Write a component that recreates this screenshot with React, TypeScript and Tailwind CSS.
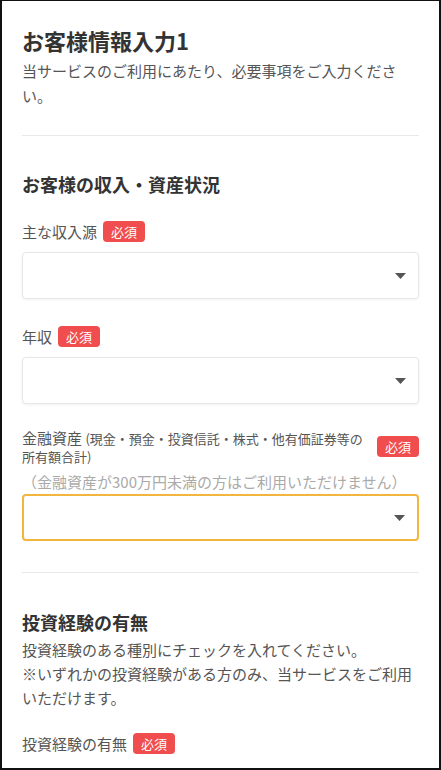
import React from "react";

function Badge() {
  return (
    <span className="inline-block shrink-0 rounded bg-[#f04e4e] px-2 text-[13px] leading-[21px] text-white">
      必須
    </span>
  );
}

function SelectBox({ active = false }: { active?: boolean }) {
  return (
    <div
      className={`flex h-[47px] items-center justify-end rounded bg-white pr-3 ${
        active
          ? "border-2 border-[#f2b63f]"
          : "border border-[#e7e7e7] shadow-[0_1px_3px_rgba(0,0,0,0.06)]"
      }`}>
      <svg width="11" height="6" viewBox="0 0 11 6">
        <path d="M0 0 L11 0 L5.5 6 Z" fill="#555" />
      </svg>
    </div>
  );
}

export default function App() {
  return (
    <div
      className="h-[770px] overflow-hidden border-t border-x-2 border-b-2 border-[#111] bg-white px-5 pt-[25px] text-[#555]"
      style={{ fontFamily: '"Noto Sans CJK JP", "Noto Sans", sans-serif' }}>
      {/* header */}
      <h1 className="text-[22px] font-bold leading-[28px] text-[#333]">お客様情報入力1</h1>
      <p className="mt-[4px] text-[15px] leading-[25px]">
        当サービスのご利用にあたり、必要事項をご入力ください。
      </p>

      <hr className="mt-[27px] border-[#e8e8e8]" />

      {/* income */}
      <h2 className="mt-[36px] text-[18px] font-bold leading-[24px] text-[#333]">
        お客様の収入・資産状況
      </h2>

      <div className="mt-[25px] flex items-center gap-[6px] text-[15px] leading-[21px]">
        主な収入源
        <Badge />
      </div>
      <div className="mt-[10px]">
        <SelectBox />
      </div>

      <div className="mt-[27px] flex items-center gap-[6px] text-[15px] leading-[21px]">
        年収
        <Badge />
      </div>
      <div className="mt-[10px]">
        <SelectBox />
      </div>

      <div className="mt-[25px] flex items-start justify-between gap-2">
        <p className="flex-1 text-[15px] leading-[17px]">
          金融資産{" "}
          <span className="text-[13px]">(現金・預金・投資信託・株式・他有価証券等の所有額合計)</span>
        </p>
        <div className="mt-[4px]">
          <Badge />
        </div>
      </div>
      <p className="mt-[6px] text-[15px] leading-[22px] text-[#aaa]">
        （金融資産が300万円未満の方はご利用いただけません）
      </p>
      <div className="mt-[1px]">
        <SelectBox active />
      </div>

      <hr className="mt-[31px] border-[#e8e8e8]" />

      {/* experience */}
      <h2 className="mt-[37px] text-[18px] font-bold leading-[24px] text-[#333]">投資経験の有無</h2>
      <p className="mt-[4px] text-[15px] leading-[24px]">
        投資経験のある種別にチェックを入れてください。
        <br />
        ※いずれかの投資経験がある方のみ、当サービスをご利用いただけます。
      </p>

      <div className="mt-[23px] flex items-center gap-[6px] text-[15px] leading-[21px]">
        投資経験の有無
        <Badge />
      </div>
    </div>
  );
}
